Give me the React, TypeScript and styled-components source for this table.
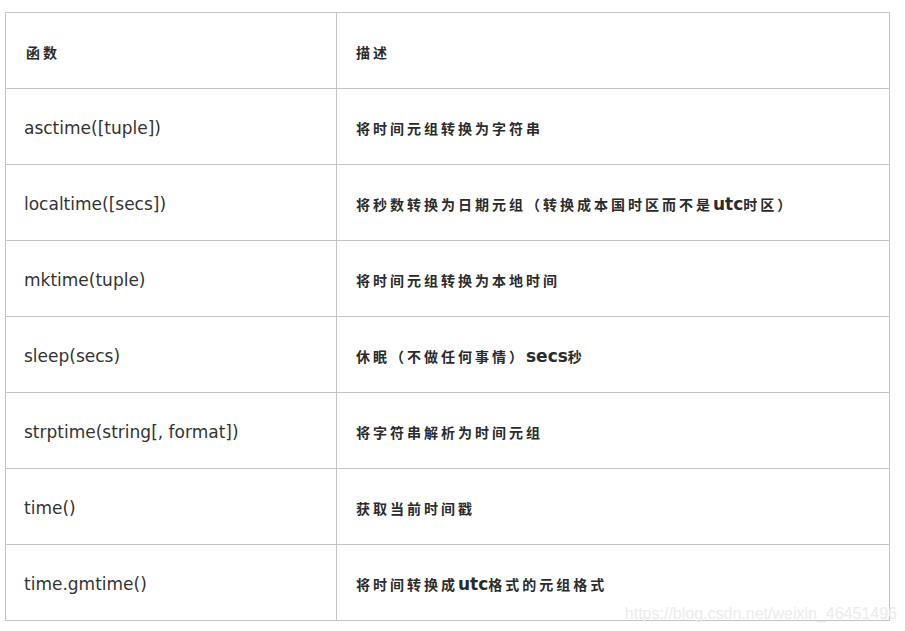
import React from "react";
import styled, { createGlobalStyle } from "styled-components";

const Global = createGlobalStyle`
  html, body { margin: 0; padding: 0; background: #fff; }
  body { font-family: "DejaVu Sans", Verdana, sans-serif; }
`;

const Page = styled.div`
  position: relative;
  width: 905px;
  height: 631px;
  padding: 12px 0 0 5px;
  box-sizing: border-box;
`;

const Table = styled.table`
  border-collapse: collapse;
  width: 885px;
  table-layout: fixed;
`;

const Row = styled.tr`
  height: 76px;
`;

const Cell = styled.td<{ $w?: number }>`
  border: 1px solid #c4c4c4;
  padding: 2px 0 0 18px;
  vertical-align: middle;
  ${(p) => (p.$w ? `width: ${p.$w}px;` : "")}
  box-sizing: border-box;
`;

const Func = styled.span`
  font-family: "DejaVu Sans", Verdana, sans-serif;
  font-size: 17px;
  color: #333;
`;

const Desc = styled.span<{ $head?: boolean }>`
  font-family: "Noto Sans CJK SC", "Noto Sans CJK TC", sans-serif;
  font-weight: 700;
  font-size: 14px;
  letter-spacing: 3px;
  color: #2b2b2b;
  padding-left: ${(p) => (p.$head ? "2px" : "1px")};
`;

const Latin = styled.span`
  font-family: "DejaVu Sans", Verdana, sans-serif;
  font-weight: 700;
  font-size: 17px;
  letter-spacing: 0;
`;

const Watermark = styled.div`
  position: absolute;
  right: 8px;
  bottom: 8px;
  font-family: "Liberation Sans", Arial, sans-serif;
  font-size: 16px;
  color: #ebebeb;
  letter-spacing: 0;
`;

type Item = { f: string; d: React.ReactNode };

const items: Item[] = [
  { f: "asctime([tuple])", d: "将时间元组转换为字符串" },
  {
    f: "localtime([secs])",
    d: (
      <>
        将秒数转换为日期元组（转换成本国时区而不是<Latin>utc</Latin>时区）
      </>
    ),
  },
  { f: "mktime(tuple)", d: "将时间元组转换为本地时间" },
  {
    f: "sleep(secs)",
    d: (
      <>
        休眠（不做任何事情）<Latin>secs</Latin>秒
      </>
    ),
  },
  { f: "strptime(string[, format])", d: "将字符串解析为时间元组" },
  { f: "time()", d: "获取当前时间戳" },
  {
    f: "time.gmtime()",
    d: (
      <>
        将时间转换成<Latin>utc</Latin>格式的元组格式
      </>
    ),
  },
];

export default function App() {
  return (
    <Page>
      <Global />
      <Table>
        <tbody>
          <Row>
            <Cell $w={331}>
              <Desc $head>函数</Desc>
            </Cell>
            <Cell>
              <Desc>描述</Desc>
            </Cell>
          </Row>
          {items.map((it) => (
            <Row key={it.f}>
              <Cell $w={331}>
                <Func>{it.f}</Func>
              </Cell>
              <Cell>
                <Desc>{it.d}</Desc>
              </Cell>
            </Row>
          ))}
        </tbody>
      </Table>
      <Watermark>https://blog.csdn.net/weixin_46451496</Watermark>
    </Page>
  );
}
